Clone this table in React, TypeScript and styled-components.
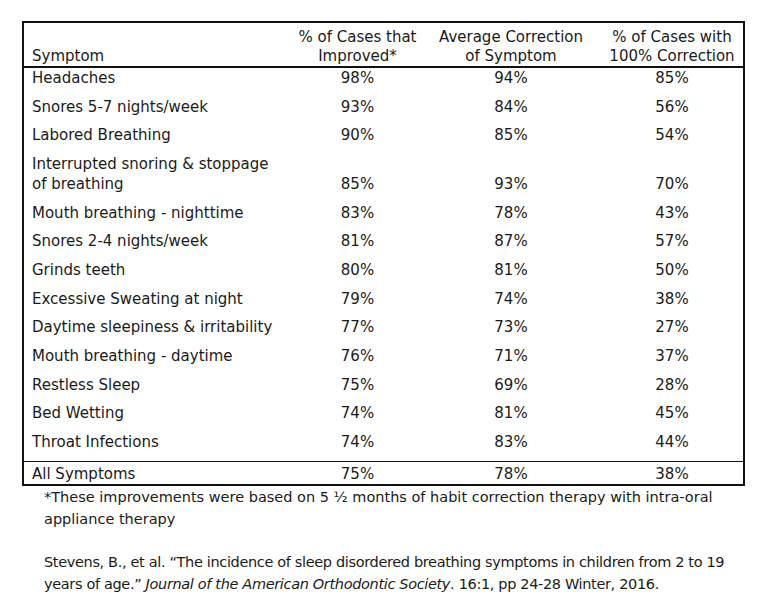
import React from 'react';
import styled, { createGlobalStyle } from 'styled-components';

const GlobalStyle = createGlobalStyle`
  html, body {
    margin: 0;
    padding: 0;
    background: #fff;
  }
  body {
    font-family: "DejaVu Sans", "Liberation Sans", sans-serif;
    color: #1a1a1a;
  }
`;

interface Row {
  symptom: React.ReactNode;
  improved: string;
  average: string;
  full: string;
}

const ROWS: Row[] = [
  { symptom: 'Headaches', improved: '98%', average: '94%', full: '85%' },
  { symptom: 'Snores 5-7 nights/week', improved: '93%', average: '84%', full: '56%' },
  { symptom: 'Labored Breathing', improved: '90%', average: '85%', full: '54%' },
  {
    symptom: (
      <>
        Interrupted snoring &amp; stoppage
        <br />
        of breathing
      </>
    ),
    improved: '85%',
    average: '93%',
    full: '70%',
  },
  { symptom: 'Mouth breathing - nighttime', improved: '83%', average: '78%', full: '43%' },
  { symptom: 'Snores 2-4 nights/week', improved: '81%', average: '87%', full: '57%' },
  { symptom: 'Grinds teeth', improved: '80%', average: '81%', full: '50%' },
  { symptom: 'Excessive Sweating at night', improved: '79%', average: '74%', full: '38%' },
  { symptom: 'Daytime sleepiness & irritability', improved: '77%', average: '73%', full: '27%' },
  { symptom: 'Mouth breathing - daytime', improved: '76%', average: '71%', full: '37%' },
  { symptom: 'Restless Sleep', improved: '75%', average: '69%', full: '28%' },
  { symptom: 'Bed Wetting', improved: '74%', average: '81%', full: '45%' },
  { symptom: 'Throat Infections', improved: '74%', average: '83%', full: '44%' },
];

export default function App() {
  return (
    <>
      <GlobalStyle />
      <Page>
        <Table>
          <colgroup>
            <col style={{ width: 271 }} />
            <col style={{ width: 127 }} />
            <col style={{ width: 180 }} />
            <col />
          </colgroup>
          <thead>
            <tr>
              <HeadCell $align="left">Symptom</HeadCell>
              <HeadCell>
                % of Cases that
                <br />
                Improved*
              </HeadCell>
              <HeadCell>
                Average Correction
                <br />
                of Symptom
              </HeadCell>
              <HeadCell>
                % of Cases with
                <br />
                100% Correction
              </HeadCell>
            </tr>
          </thead>
          <tbody>
            {ROWS.map((row, i) => (
              <tr key={i}>
                <Cell $align="left">{row.symptom}</Cell>
                <Cell>{row.improved}</Cell>
                <Cell>{row.average}</Cell>
                <Cell>{row.full}</Cell>
              </tr>
            ))}
          </tbody>
          <tfoot>
            <TotalRow>
              <Cell $align="left">All Symptoms</Cell>
              <Cell>75%</Cell>
              <Cell>78%</Cell>
              <Cell>38%</Cell>
            </TotalRow>
          </tfoot>
        </Table>

        <Notes>
          <Note $tracking={0}>
            *These improvements were based on 5 ½ months of habit correction therapy with intra-oral
            <br />
            appliance therapy
          </Note>
          <Note $tracking={-0.35}>
            Stevens, B., et al. “The incidence of sleep disordered breathing symptoms in children from 2 to 19
            <br />
            years of age.” <em>Journal of the American Orthodontic Society</em>. 16:1, pp 24-28 Winter, 2016.
          </Note>
        </Notes>
      </Page>
    </>
  );
}

const Page = styled.div`
  padding: 21px 0 0 22px;
`;

const Table = styled.table`
  width: 723px;
  border-collapse: collapse;
  border: 2px solid #111;
  table-layout: fixed;
  font-size: 15px;
`;

const HeadCell = styled.th<{ $align?: 'left' | 'center' }>`
  font-weight: 400;
  text-align: ${({ $align }) => $align || 'center'};
  vertical-align: bottom;
  line-height: 19px;
  padding: 5px 0 0 ${({ $align }) => ($align === 'left' ? '8px' : '0')};
  border-bottom: 2px solid #111;
  white-space: nowrap;
`;

const Cell = styled.td<{ $align?: 'left' | 'center' }>`
  text-align: ${({ $align }) => $align || 'center'};
  vertical-align: bottom;
  line-height: 20px;
  padding: 0 0 8.67px ${({ $align }) => ($align === 'left' ? '8px' : '0')};
  white-space: nowrap;
`;

const TotalRow = styled.tr`
  border-top: 1.5px solid #111;

  td {
    padding-top: 2.5px;
    padding-bottom: 0;
  }
`;

const Notes = styled.div`
  padding-left: 22px;
  font-size: 14.5px;
  line-height: 22px;
`;

const Note = styled.p<{ $tracking: number }>`
  margin: 0 0 21px;
  white-space: nowrap;
  letter-spacing: ${({ $tracking }) => $tracking}px;

  em {
    font-style: italic;
  }
`;
